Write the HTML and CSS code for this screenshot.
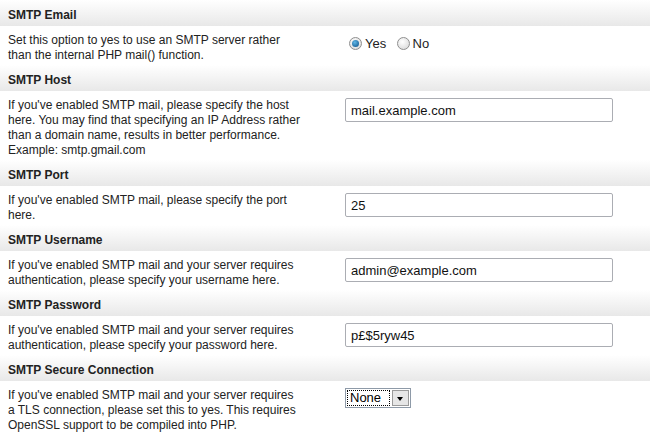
FILE: index.html
```html
<!DOCTYPE html>
<html lang="en">
<head>
    <meta charset="UTF-8">
    <title>SMTP Settings</title>
    <link rel="stylesheet" href="styles.css">
</head>
<body>

    <div class="settings">

        <div class="head">SMTP Email</div>
        <div class="row">
            <div class="desc">Set this option to yes to use an SMTP server rather than the internal PHP mail() function.</div>
            <div class="field">
                <label class="radio"><span class="dot checked"></span>Yes</label>
                <label class="radio"><span class="dot"></span>No</label>
            </div>
        </div>

        <div class="head">SMTP Host</div>
        <div class="row">
            <div class="desc">If you've enabled SMTP mail, please specify the host here. You may find that specifying an IP Address rather than a domain name, results in better performance. Example: smtp.gmail.com</div>
            <div class="field"><input type="text" value="mail.example.com"></div>
        </div>

        <div class="head">SMTP Port</div>
        <div class="row">
            <div class="desc">If you've enabled SMTP mail, please specify the port here.</div>
            <div class="field"><input type="text" value="25"></div>
        </div>

        <div class="head">SMTP Username</div>
        <div class="row">
            <div class="desc">If you've enabled SMTP mail and your server requires authentication, please specify your username here.</div>
            <div class="field"><input type="text" value="admin@example.com"></div>
        </div>

        <div class="head">SMTP Password</div>
        <div class="row">
            <div class="desc">If you've enabled SMTP mail and your server requires authentication, please specify your password here.</div>
            <div class="field"><input type="text" value="p£$5ryw45"></div>
        </div>

        <div class="head">SMTP Secure Connection</div>
        <div class="row">
            <div class="desc">If you've enabled SMTP mail and your server requires a TLS connection, please set this to yes. This requires OpenSSL support to be compiled into PHP.</div>
            <div class="field">
                <div class="select">
                    <span class="value">None</span>
                    <span class="arrow"></span>
                </div>
            </div>
        </div>

    </div>

</body>
</html>
```

FILE: styles.css
```css
body{
    margin: 0px;
    background: white;
    font-family: 'Liberation Sans', Arial, sans-serif;
    font-size: 12px;
    color: #222;
}

.head{
    padding: 8px 0px 3px 8px;
    line-height: 15px;
    font-weight: bold;
    color: #222;
    background: linear-gradient(#ffffff, #e8e8e8);
}

.row{
    display: flex;
    padding: 7px 0px 2px 8px;
    line-height: 15px;
}

.desc{
    width: 294px;
}

.field{
    padding-left: 43px;
}

input{
    width: 268px;
    height: 24px;
    padding: 0px 5px;
    border: 1px solid #abadb3;
    border-radius: 2px;
    box-sizing: border-box;
    font-family: 'Liberation Sans', Arial, sans-serif;
    font-size: 13px;
    color: #111;
}

.radio{
    display: inline-flex;
    align-items: center;
    margin-top: 3px;
    margin-right: 3px;
    font-size: 13px;
    color: #222;
}

.dot{
    width: 11px;
    height: 11px;
    margin: 0px 3px 0px 4px;
    border: 1px solid #8f8f8f;
    border-radius: 50%;
    background: radial-gradient(circle at 40% 35%, #ffffff, #d4d4d4);
    position: relative;
}

.dot.checked::after{
    content: "";
    position: absolute;
    left: 2px;
    top: 2px;
    width: 7px;
    height: 7px;
    border-radius: 50%;
    background: radial-gradient(circle at 40% 35%, #5fb6e6, #0b4f86);
}

.select{
    display: flex;
    width: 64px;
    height: 18px;
    border: 1px solid #8e9aa8;
    background: white;
    font-size: 13px;
}

.value{
    flex: 1;
    margin: 1px;
    padding-left: 2px;
    line-height: 14px;
    border: 1px dotted #000;
    color: #000;
}

.arrow{
    width: 15px;
    margin: 1px;
    background: #e6e6e6;
    border: 1px solid #9a9a9a;
    position: relative;
}

.arrow::after{
    content: "";
    position: absolute;
    left: 4px;
    top: 6px;
    border-left: 3.5px solid transparent;
    border-right: 3.5px solid transparent;
    border-top: 4px solid #000;
}
```
